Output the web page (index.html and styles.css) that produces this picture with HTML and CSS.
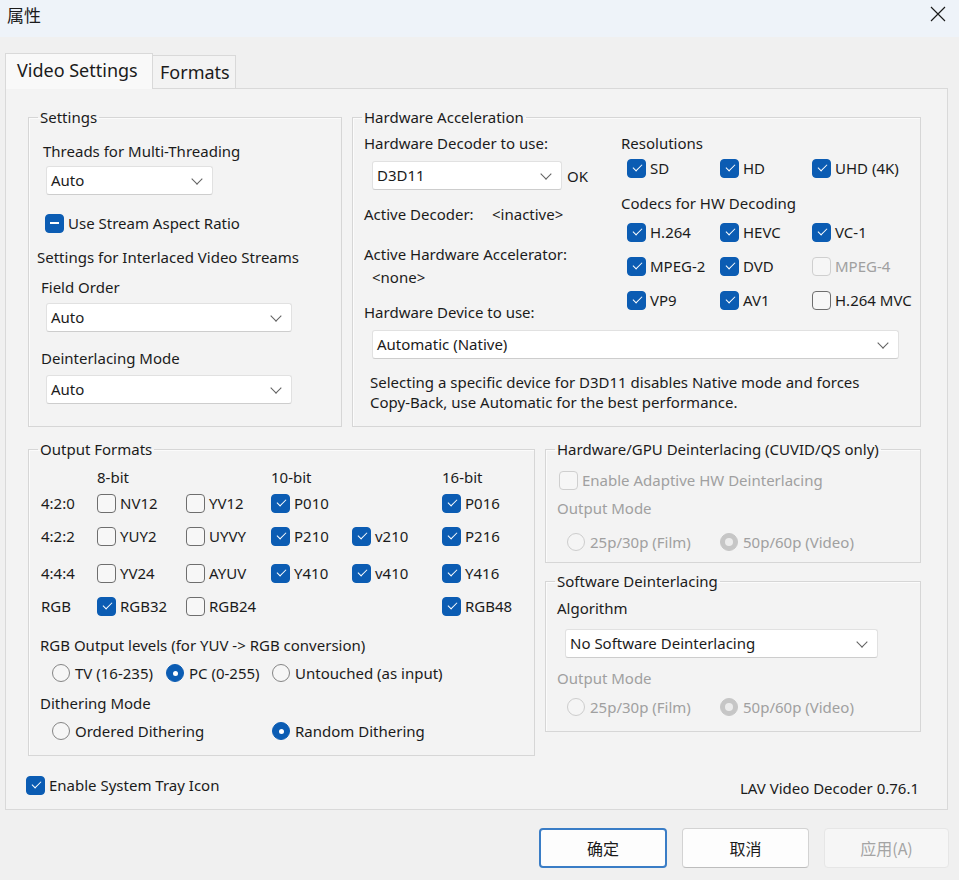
FILE: index.html
```html
<!DOCTYPE html>
<html lang="zh-CN">
<head>
<meta charset="utf-8">
<title>属性</title>
<link rel="stylesheet" href="styles.css">
</head>
<body>
<div class="titlebar">
  <span class="title">属性</span>
  <svg class="close" viewBox="0 0 16 16" width="16" height="16"><path d="M1 1L15 15M15 1L1 15" stroke="#1a1a1a" stroke-width="1.15" fill="none"/></svg>
</div>

<div class="tabs">
  <div class="tab active">Video Settings</div>
  <div class="tab plain">Formats</div>
</div>

<div class="panel">
  <div class="row1">
    <fieldset class="grp g-settings">
      <legend>Settings</legend>
      <div class="t s-threads">Threads for Multi-Threading</div>
      <div class="select s-sel1">Auto</div>
      <label class="cb ind blk s-aspect"><span class="box"></span>Use Stream Aspect Ratio</label>
      <div class="t s-inter">Settings for Interlaced Video Streams</div>
      <div class="t s-field">Field Order</div>
      <div class="select s-sel2">Auto</div>
      <div class="t s-deint">Deinterlacing Mode</div>
      <div class="select s-sel3">Auto</div>
    </fieldset>

    <fieldset class="grp g-hw">
      <legend>Hardware Acceleration</legend>
      <div class="hw-top">
        <div class="hw-left">
          <div class="t h-dec">Hardware Decoder to use:</div>
          <div class="h-decrow"><div class="select h-sel1">D3D11</div><span class="ok">OK</span></div>
          <div class="t h-active"><span class="lblw">Active Decoder:</span>&lt;inactive&gt;</div>
          <div class="t h-accel">Active Hardware Accelerator:</div>
          <div class="t h-none">&lt;none&gt;</div>
          <div class="t h-dev">Hardware Device to use:</div>
        </div>
        <div class="hw-right">
          <div class="t r-res">Resolutions</div>
          <div class="cbgrid r-resrow">
            <label class="cb on"><span class="box"></span>SD</label>
            <label class="cb on"><span class="box"></span>HD</label>
            <label class="cb on"><span class="box"></span>UHD (4K)</label>
          </div>
          <div class="t r-codecs">Codecs for HW Decoding</div>
          <div class="cbgrid r-row1">
            <label class="cb on"><span class="box"></span>H.264</label>
            <label class="cb on"><span class="box"></span>HEVC</label>
            <label class="cb on"><span class="box"></span>VC-1</label>
          </div>
          <div class="cbgrid r-row2">
            <label class="cb on"><span class="box"></span>MPEG-2</label>
            <label class="cb on"><span class="box"></span>DVD</label>
            <label class="cb dis"><span class="box"></span>MPEG-4</label>
          </div>
          <div class="cbgrid r-row3">
            <label class="cb on"><span class="box"></span>VP9</label>
            <label class="cb on"><span class="box"></span>AV1</label>
            <label class="cb"><span class="box"></span>H.264 MVC</label>
          </div>
        </div>
      </div>
      <div class="select h-sel2">Automatic (Native)</div>
      <div class="h-note">Selecting a specific device for D3D11 disables Native mode and forces<br>Copy-Back, use Automatic for the best performance.</div>
    </fieldset>
  </div>

  <div class="row2">
    <fieldset class="grp g-out">
      <legend>Output Formats</legend>
      <div class="fmt">
        <div></div><div class="t">8-bit</div><div></div><div class="t">10-bit</div><div></div><div class="t">16-bit</div>

        <div class="t">4:2:0</div>
        <label class="cb"><span class="box"></span>NV12</label>
        <label class="cb"><span class="box"></span>YV12</label>
        <label class="cb on"><span class="box"></span>P010</label>
        <div></div>
        <label class="cb on"><span class="box"></span>P016</label>

        <div class="t">4:2:2</div>
        <label class="cb"><span class="box"></span>YUY2</label>
        <label class="cb"><span class="box"></span>UYVY</label>
        <label class="cb on"><span class="box"></span>P210</label>
        <label class="cb on"><span class="box"></span>v210</label>
        <label class="cb on"><span class="box"></span>P216</label>

        <div class="t">4:4:4</div>
        <label class="cb"><span class="box"></span>YV24</label>
        <label class="cb"><span class="box"></span>AYUV</label>
        <label class="cb on"><span class="box"></span>Y410</label>
        <label class="cb on"><span class="box"></span>v410</label>
        <label class="cb on"><span class="box"></span>Y416</label>

        <div class="t">RGB</div>
        <label class="cb on"><span class="box"></span>RGB32</label>
        <label class="cb"><span class="box"></span>RGB24</label>
        <div></div>
        <div></div>
        <label class="cb on"><span class="box"></span>RGB48</label>
      </div>
      <div class="t o-levels">RGB Output levels (for YUV -&gt; RGB conversion)</div>
      <div class="radios o-lvrow">
        <label class="rb w-tv"><span class="dot"></span>TV (16-235)</label>
        <label class="rb on w-pc"><span class="dot"></span>PC (0-255)</label>
        <label class="rb"><span class="dot"></span>Untouched (as input)</label>
      </div>
      <div class="t o-dith">Dithering Mode</div>
      <div class="radios o-dirow">
        <label class="rb w-ord"><span class="dot"></span>Ordered Dithering</label>
        <label class="rb on"><span class="dot"></span>Random Dithering</label>
      </div>
    </fieldset>

    <div class="rcol">
      <fieldset class="grp g-hwdi">
        <legend>Hardware/GPU Deinterlacing (CUVID/QS only)</legend>
        <label class="cb dis blk d-adapt"><span class="box"></span>Enable Adaptive HW Deinterlacing</label>
        <div class="t gray d-om">Output Mode</div>
        <div class="radios d-rad">
          <label class="rb dis w-film"><span class="dot"></span>25p/30p (Film)</label>
          <label class="rb dis on"><span class="dot"></span>50p/60p (Video)</label>
        </div>
      </fieldset>
      <fieldset class="grp g-swdi">
        <legend>Software Deinterlacing</legend>
        <div class="t sw-alg">Algorithm</div>
        <div class="select sw-sel">No Software Deinterlacing</div>
        <div class="t gray sw-om">Output Mode</div>
        <div class="radios sw-rad">
          <label class="rb dis w-film"><span class="dot"></span>25p/30p (Film)</label>
          <label class="rb dis on"><span class="dot"></span>50p/60p (Video)</label>
        </div>
      </fieldset>
    </div>
  </div>

  <div class="footer">
    <label class="cb on tray"><span class="box"></span>Enable System Tray Icon</label>
    <span class="version">LAV Video Decoder 0.76.1</span>
  </div>
</div>

<div class="buttons">
  <div class="btn primary">确定</div>
  <div class="btn">取消</div>
  <div class="btn disabled">应用(A)</div>
</div>
</body>
</html>
```

FILE: styles.css
```css
* { box-sizing: border-box; }
html, body { margin: 0; padding: 0; }
body {
  width: 959px;
  height: 880px;
  overflow: hidden;
  background: #f0f0f0;
  font-family: "Noto Sans", "Noto Sans CJK SC", sans-serif;
  font-size: 15px;
  line-height: 20px;
  color: #1b1b1b;
}

/* title bar */
.titlebar {
  height: 37px;
  background: #eef3f9;
  display: flex;
  justify-content: space-between;
  align-items: flex-start;
  padding: 0 13px 0 7px;
}
.title {
  font-family: "Noto Sans CJK SC", sans-serif;
  font-size: 17px;
  line-height: 30px;
}
.close { margin-top: 6px; display: block; }

/* tabs */
.tabs {
  display: flex;
  align-items: flex-end;
  height: 36px;
  margin: 16px 0 -1px 5px;
  position: relative;
  z-index: 1;
}
.tab {
  display: flex;
  align-items: center;
  font-size: 18px;
  border: 1px solid #d9d9d9;
  border-bottom: none;
}
.tab.active {
  width: 148px;
  height: 36px;
  background: #f9f9f9;
  padding: 0 0 4px 11px;
}
.tab.plain {
  width: 83px;
  height: 33px;
  margin-bottom: 1px;
  border-left: none;
  background: #f3f3f3;
  padding-left: 7px;
}

/* panel */
.panel {
  margin-left: 5px;
  width: 943px;
  height: 722px;
  border: 1px solid #d9d9d9;
  background: #f3f3f3;
  padding: 18px 0 0 22px;
}
.row1 { display: flex; gap: 10px; height: 320px; }
.row2 { display: flex; gap: 10px; height: 317px; margin-top: 12px; }
.rcol { display: flex; flex-direction: column; gap: 8px; width: 376px; }

.grp {
  margin: 0;
  padding: 0;
  min-width: 0;
  border: 1px solid #d6d6d6;
  box-shadow: 1px 1px 0 #fbfbfb inset;
  display: block;
}
.grp legend {
  padding: 0 2px;
  margin-left: 9px;
  line-height: 20px;
}
.t { line-height: 20px; height: 20px; white-space: nowrap; }
.gray { color: #a0a0a0; }

.g-settings { width: 314px; }
.g-hw { width: 569px; }
.g-out { width: 507px; }
.g-hwdi { height: 124px; }
.g-swdi { height: 161px; }

/* select */
.select {
  position: relative;
  height: 29px;
  line-height: 27px;
  background: #fff;
  border: 1px solid #e1e1e1;
  border-bottom-color: #cdcdcd;
  border-radius: 3px;
  padding-left: 4px;
  white-space: nowrap;
}
.select::after {
  content: "";
  position: absolute;
  right: 11px;
  top: 50%;
  width: 7px;
  height: 7px;
  border-right: 1px solid #606060;
  border-bottom: 1px solid #606060;
  transform: translateY(-75%) rotate(45deg);
}

/* checkboxes */
.cb {
  display: inline-flex;
  align-items: center;
  gap: 4px;
  height: 20px;
  white-space: nowrap;
}
.cb.blk { display: flex; width: max-content; }
.box {
  flex: none;
  position: relative;
  width: 19px;
  height: 19px;
  border: 1px solid #6e6e6e;
  border-radius: 4px;
  background: #f7f7f7;
}
.cb.on .box, .cb.ind .box { background: #0b5cb3; border-color: #0b5cb3; }
.cb.on .box::after {
  content: "";
  position: absolute;
  left: 4.5px;
  top: 4px;
  width: 8px;
  height: 4px;
  border-left: 1.3px solid #fff;
  border-bottom: 1.3px solid #fff;
  transform: rotate(-45deg);
}
.cb.ind .box::after {
  content: "";
  position: absolute;
  left: 4px;
  top: 7.5px;
  width: 9px;
  height: 2px;
  background: #fff;
}
.cb.dis { color: #a0a0a0; }
.cb.dis .box { border-color: #cfcfcf; background: #f6f6f6; }

/* radios */
.radios { display: flex; height: 20px; align-items: center; }
.rb {
  display: inline-flex;
  align-items: center;
  gap: 5px;
  height: 20px;
  white-space: nowrap;
}
.dot {
  flex: none;
  position: relative;
  width: 18px;
  height: 18px;
  border-radius: 50%;
  border: 1px solid #858585;
  background: #f6f6f6;
}
.rb.on .dot { background: #0b5cb3; border-color: #0b5cb3; }
.rb.on .dot::after {
  content: "";
  position: absolute;
  left: 5.5px;
  top: 5.5px;
  width: 5px;
  height: 5px;
  border-radius: 50%;
  background: #fff;
}
.rb.dis { color: #a0a0a0; }
.rb.dis .dot { border-color: #cdcdcd; background: #f5f5f5; }
.rb.dis.on .dot { background: #c6c6c6; border-color: #c6c6c6; }
.rb.dis.on .dot::after { left: 4px; top: 4px; width: 8px; height: 8px; background: #ececec; }

/* settings group */
.s-threads { margin: 14px 0 0 14px; }
.s-sel1 { margin: 5px 0 0 17px; width: 167px; }
.s-aspect { margin: 18px 0 0 16px; }
.s-inter { margin: 14px 0 0 8px; }
.s-field { margin: 10px 0 0 12px; }
.s-sel2 { margin: 6px 0 0 17px; width: 246px; }
.s-deint { margin: 16px 0 0 12px; }
.s-sel3 { margin: 7px 0 0 17px; width: 246px; }

/* hardware acceleration group */
.hw-top { display: flex; align-items: flex-start; padding-left: 11px; }
.hw-left { width: 257px; }
.hw-right { flex: 1; }
.h-dec { margin-top: 6px; }
.h-decrow { display: flex; align-items: center; margin: 8px 0 0 8px; height: 29px; }
.h-sel1 { width: 190px; }
.ok { margin-left: 5px; }
.h-active { margin-top: 14px; }
.lblw { display: inline-block; width: 128px; }
.h-accel { margin-top: 20px; }
.h-none { margin: 3px 0 0 8px; }
.h-dev { margin-top: 15px; }
.h-sel2 { margin: 8px 0 0 19px; width: 527px; }
.h-note { margin: 13px 0 0 17px; line-height: 20px; }

.r-res { margin-top: 6px; }
.cbgrid { display: grid; grid-template-columns: 93px 92px auto; padding-left: 6px; height: 20px; }
.r-resrow { margin-top: 5px; }
.r-codecs { margin-top: 15px; }
.r-row1 { margin-top: 9px; }
.r-row2 { margin-top: 14px; }
.r-row3 { margin-top: 14px; }

/* output formats */
.fmt {
  display: grid;
  grid-template-columns: 56px 89px 85px 81px 90px auto;
  grid-template-rows: 26px 33px 37px 33px 20px;
  margin: 8px 0 0 12px;
}
.fmt > * { align-self: start; }
.o-levels { margin: 19px 0 0 11px; }
.o-lvrow { margin: 8px 0 0 23px; }
.w-tv { width: 114px; }
.w-pc { width: 106px; }
.o-dith { margin: 10px 0 0 11px; }
.o-dirow { margin: 8px 0 0 23px; }
.w-ord { width: 220px; }

/* hw deinterlacing */
.d-adapt { margin: 11px 0 0 13px; }
.d-om { margin: 8px 0 0 11px; }
.d-rad { margin: 14px 0 0 21px; }
.w-film { width: 153px; }

/* sw deinterlacing */
.sw-alg { margin: 7px 0 0 11px; }
.sw-sel { margin: 11px 0 0 19px; width: 313px; }
.sw-om { margin: 10px 0 0 11px; }
.sw-rad { margin: 9px 0 0 21px; }

/* footer */
.footer {
  display: flex;
  justify-content: space-between;
  align-items: flex-start;
  margin: 19px 28px 0 -2px;
}
.version { margin-top: 3px; white-space: nowrap; }

/* buttons */
.buttons {
  display: flex;
  justify-content: flex-end;
  gap: 15px;
  padding-right: 10px;
  margin-top: 18px;
}
.btn {
  width: 127px;
  height: 40px;
  display: flex;
  align-items: center;
  justify-content: center;
  font-family: "Noto Sans CJK SC", sans-serif;
  font-size: 16px;
  background: #fdfdfd;
  border: 1px solid #d3d3d3;
  border-bottom-color: #bdbdbd;
  border-radius: 4px;
}
.btn.primary { border: 2px solid #3a7dc6; width: 128px; }
.btn.disabled { width: 125px; background: #f6f6f6; border-color: #e6e6e6; color: #a4a4a4; }
```
